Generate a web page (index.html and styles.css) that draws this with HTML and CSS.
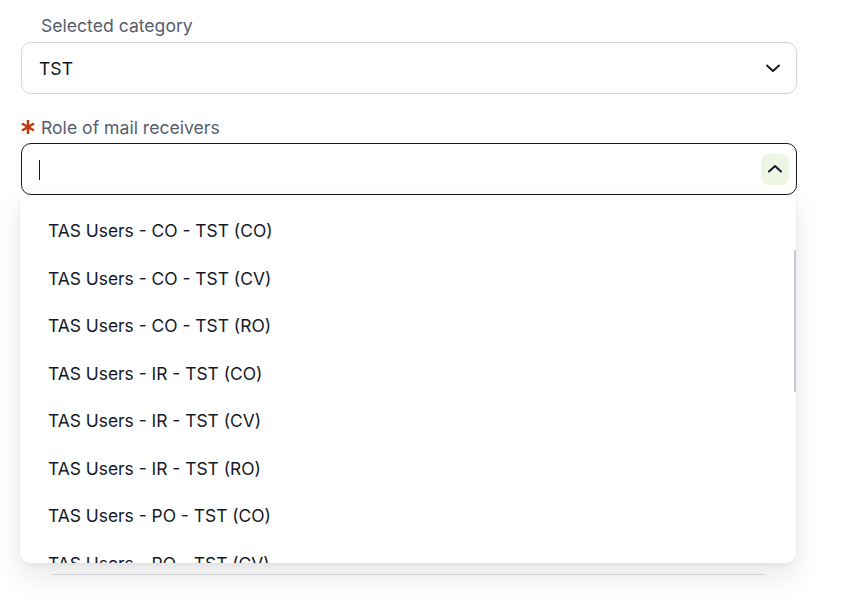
FILE: index.html
```html
<!DOCTYPE html>
<html>
<head>
<meta charset="utf-8">
<link rel="stylesheet" href="styles.css">
</head>
<body>
<div class="page">
  <div class="field">
    <div class="label"><span class="label-text">Selected category</span></div>
    <div class="select">
      <span class="value">TST</span>
      <span class="chev">
        <svg width="16" height="16" viewBox="0 0 16 16"><polyline points="2,5.5 8,11 14,5.5" fill="none" stroke="#14182b" stroke-width="2" stroke-linecap="round" stroke-linejoin="round"/></svg>
      </span>
    </div>
  </div>
  <div class="field field-2">
    <div class="label req">
      <svg class="ast" width="14" height="14" viewBox="0 0 14 14"><g stroke="#c23a14" stroke-width="2.6" stroke-linecap="butt"><line x1="7" y1="0" x2="7" y2="14"/><line x1="1" y1="3.5" x2="13" y2="10.5"/><line x1="1" y1="10.5" x2="13" y2="3.5"/></g></svg>
      <span class="label-text">Role of mail receivers</span>
    </div>
    <div class="select active">
      <span class="caret"></span>
      <span class="chev-btn">
        <svg width="16" height="16" viewBox="0 0 16 16"><polyline points="2,10.5 8,5 14,10.5" fill="none" stroke="#14182b" stroke-width="2" stroke-linecap="round" stroke-linejoin="round"/></svg>
      </span>
      <div class="menu">
        <ul class="options">
          <li>TAS Users - CO - TST (CO)</li>
          <li>TAS Users - CO - TST (CV)</li>
          <li>TAS Users - CO - TST (RO)</li>
          <li>TAS Users - IR - TST (CO)</li>
          <li>TAS Users - IR - TST (CV)</li>
          <li>TAS Users - IR - TST (RO)</li>
          <li>TAS Users - PO - TST (CO)</li>
          <li>TAS Users - PO - TST (CV)</li>
        </ul>
        <span class="thumb"></span>
      </div>
    </div>
  </div>
  <div class="divider"></div>
</div>
</body>
</html>
```

FILE: styles.css
```css
* { box-sizing: border-box; }
html, body { margin: 0; padding: 0; background: #fff; }
body {
  font-family: Inter, "Noto Sans", sans-serif;
  color: #1b1f2b;
  width: 847px;
  height: 612px;
  overflow: hidden;
}
.page {
  padding: 14px 0 0 21px;
  width: 797px;
}
.field { display: flex; flex-direction: column; }
.field-2 { margin-top: 22px; }
.label {
  display: flex;
  align-items: center;
  height: 22px;
  margin-bottom: 6px;
  padding-left: 20px;
  font-size: 17.6px;
  color: #555d6e;
}
.label.req { padding-left: 0; gap: 6px; margin-bottom: 5px; }
.ast { flex: none; }
.select {
  position: relative;
  height: 52px;
  border: 1px solid #d6d6e0;
  border-radius: 10px;
  display: flex;
  align-items: center;
  justify-content: space-between;
  padding: 0 15px 0 17px;
}
.value { font-size: 17.6px; color: #10131f; }
.chev { display: flex; width: 16px; height: 16px; }
.select.active {
  border-color: #1b1b1b;
  padding-right: 7px;
}
.caret {
  display: block;
  width: 1.2px;
  height: 20px;
  background: #1b1b1b;
  margin-top: 1px;
}
.chev-btn {
  display: flex;
  align-items: center;
  justify-content: center;
  width: 28px;
  height: 31px;
  border-radius: 7px;
  background: #eef5e3;
}
.menu {
  position: absolute;
  top: calc(100% + 3px);
  left: -2px;
  width: 776px;
  height: 366px;
  background: #fff;
  border-radius: 3px 3px 10px 10px;
  box-shadow: 0 12px 28px rgba(20, 24, 40, 0.10), 0 2px 6px rgba(20, 24, 40, 0.05);
  overflow: hidden;
  z-index: 5;
}
.options {
  list-style: none;
  margin: 0;
  padding: 10px 0 0 0;
}
.options li {
  height: 47.5px;
  display: flex;
  align-items: center;
  padding-left: 28px;
  font-size: 17.4px;
  color: #141826;
}
.thumb {
  position: absolute;
  right: 0;
  top: 53px;
  width: 2px;
  height: 142px;
  background: #c9c9d6;
}
.divider {
  margin: 379px 32px 0 31px;
  border-top: 1px solid #dcdce2;
}
```
